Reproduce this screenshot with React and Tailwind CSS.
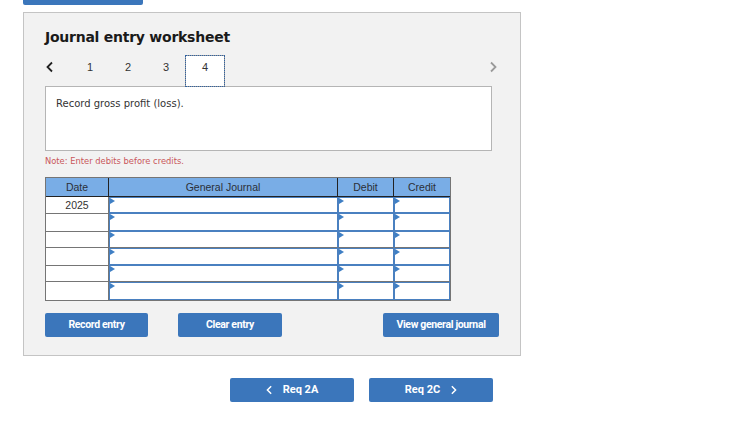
import React from "react";

const columns = "grid grid-cols-[63px_229px_56px_56px]";

// the rules between rows are not even in the worksheet: some are two blue pixels, some gray over blue
const rows = [
  { date: "2025", height: "h-[17px]", cell: "border-x border-t border-b-2" },
  { date: "", height: "h-[18px]", cell: "border-x border-b-2" },
  { date: "", height: "h-[16px]", cell: "border-x border-b border-b-[#757575]" },
  { date: "", height: "h-[18px]", cell: "border-x border-t border-b-2" },
  { date: "", height: "h-[16px]", cell: "border-x border-b border-b-[#757575]" },
  { date: "", height: "h-[18px]", cell: "border-x border-y" },
];

const Chevron = ({ flip, className }) => (
  <svg width="8" height="12" viewBox="0 0 8 12" className={className}>
    <path
      d={flip ? "M2 1.5 L6.5 6 L2 10.5" : "M6 1.5 L1.5 6 L6 10.5"}
      fill="none"
      stroke="currentColor"
      strokeWidth="1.8"
    />
  </svg>
);

const EntryCell = ({ className }) => (
  <div className={`relative h-full border-[#4a80c0] bg-white ${className}`}>
    <span className="absolute left-0 top-0 h-0 w-0 border-y-[3px] border-l-[5px] border-y-transparent border-l-[#3f7fc4]" />
  </div>
);

const ActionButton = ({ className, children }) => (
  <button className={`flex h-[24px] items-center justify-center rounded-[2px] bg-[#3b76bb] font-['Roboto',sans-serif] font-bold text-white ${className}`}>
    {children}
  </button>
);

export default function App() {
  return (
    <div className="h-[442px] w-[745px] overflow-hidden bg-white font-['DejaVu_Sans',sans-serif]">
      <div className="ml-[23px] h-[5px] w-[120px] rounded-b-[2px] bg-[#3b76bb]" />

      <div className="ml-[23px] mt-[7px] h-[344px] w-[498px] border border-[#c4c4c4] bg-[#f2f2f2] pl-[21px] pt-[14px]">
        <h2 className="h-[20px] text-[14px] font-bold leading-[20px] tracking-[-0.25px] text-[#1a1a1a]">Journal entry worksheet</h2>

        <div className="mt-[9px] flex h-[30px] items-start">
          <Chevron className="ml-[1px] mt-[5px] text-[#222]" />
          <div className="ml-[17px] flex font-['Liberation_Sans',sans-serif] text-[11px] text-[#333]">
            <span className="flex h-[22px] w-[38px] items-center justify-center">1</span>
            <span className="flex h-[22px] w-[38px] items-center justify-center">2</span>
            <span className="flex h-[22px] w-[38px] items-center justify-center">3</span>
            <span className="relative z-10 -mt-[1px] h-[32px] w-[40px] bg-[#9a9a9a]">
              <span className="flex h-full w-full items-start justify-center border border-dotted border-[#2f62a3] bg-white bg-clip-padding pt-[3px]">4</span>
            </span>
          </div>
          <Chevron flip className="ml-[264px] mt-[5px] text-[#9a9a9a]" />
        </div>

        <div className="h-[65px] w-[447px] border border-[#b5b5b5] bg-white pl-[10px] pt-[11px] text-[10px] leading-[12px] text-[#333]">
          Record gross profit (loss).
        </div>

        <p className="mt-[4px] h-[12px] text-[8.35px] leading-[12px] text-[#c9575b]">Note: Enter debits before credits.</p>

        <div className="mt-[10px] w-[406px] border border-[#757575] font-['Liberation_Sans',sans-serif] text-[10.5px]">
          <div className={`${columns} h-[19px] border-b border-[#222] bg-[#79ade6] text-center leading-[18px] text-[#2b2f36]`}>
            <div className="border-r border-[#222]">Date</div>
            <div className="border-r border-[#222]">General Journal</div>
            <div className="border-r border-[#222]">Debit</div>
            <div>Credit</div>
          </div>
          {rows.map((row, i) => (
            <div key={i} className={`${columns} ${row.height}`}>
              <div className={`h-full border-r border-[#757575] bg-white text-center leading-[16px] text-[#333] ${i < 5 ? "border-b" : ""}`}>{row.date}</div>
              <EntryCell className={row.cell} />
              <EntryCell className={row.cell} />
              <EntryCell className={row.cell} />
            </div>
          ))}
        </div>

        <div className="mt-[12px] flex">
          <ActionButton className="w-[103px] text-[10.5px] tracking-[-0.35px]">Record entry</ActionButton>
          <ActionButton className="ml-[30px] w-[104px] text-[10.5px] tracking-[-0.35px]">Clear entry</ActionButton>
          <ActionButton className="ml-[101px] w-[116px] text-[10.5px] tracking-[-0.35px]">View general journal</ActionButton>
        </div>
      </div>

      <div className="ml-[230px] mt-[22px] flex gap-[15px]">
        <ActionButton className="w-[124px] text-[11px]">
          <Chevron className="mr-[10px] h-[10px] w-[7px]" />
          Req 2A
        </ActionButton>
        <ActionButton className="w-[124px] text-[11px]">
          Req 2C
          <Chevron flip className="ml-[10px] h-[10px] w-[7px]" />
        </ActionButton>
      </div>
    </div>
  );
}
